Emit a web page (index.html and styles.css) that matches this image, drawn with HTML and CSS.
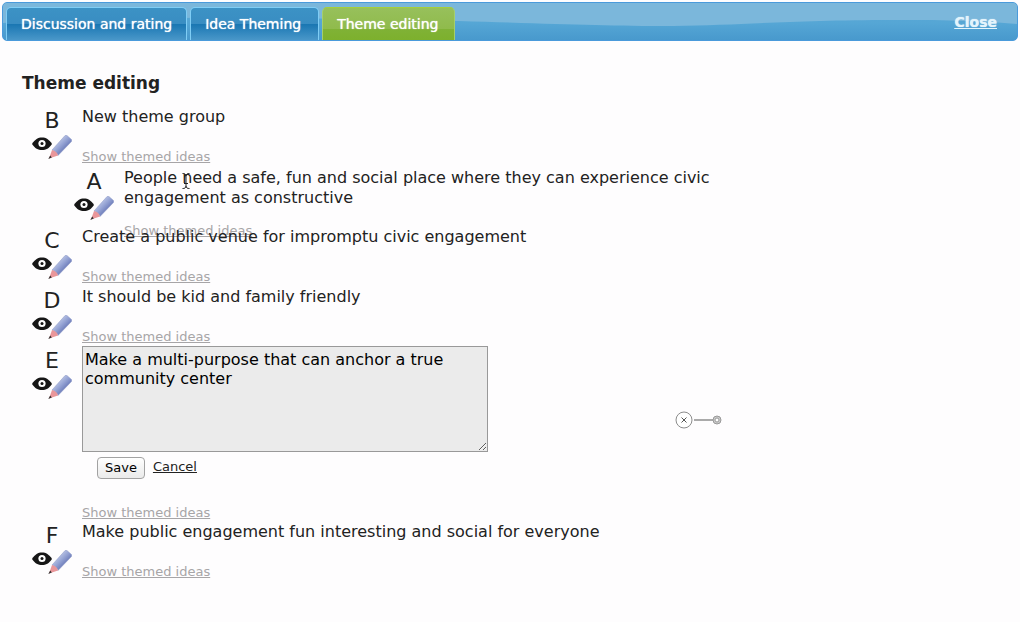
FILE: index.html
```html
<!DOCTYPE html>
<html lang="en">
<head>
<meta charset="utf-8">
<title>Theme editing</title>
<link rel="stylesheet" href="styles.css">
</head>
<body>
<svg class="defs" aria-hidden="true">
  <defs>
    <linearGradient id="pencil-body" x1=".3" y1=".3" x2=".7" y2=".7">
      <stop offset="0" stop-color="#b9c3e4"/>
      <stop offset=".45" stop-color="#95a3d4"/>
      <stop offset="1" stop-color="#6877b6"/>
    </linearGradient>
    <symbol id="eye" viewBox="0 0 20 14">
      <path d="M0 7C3 2.300 6 .5 10 .5S17 2.300 20 7C17 11.500 14 13 10 13S3 11.500 0 7Z" fill="#161616"/>
      <circle cx="10" cy="6.500" r="3.600" fill="#fff"/>
      <circle cx="10" cy="6.500" r="1.500" fill="#161616"/>
    </symbol>
    <symbol id="pencil" viewBox="0 0 24 24">
      <path d="M4 15 17 .6Q18 0 19 .6L23.500 4.500Q24 5.500 23.500 6.500L10 20.500Q8.500 16.500 4 15Z" fill="url(#pencil-body)" stroke="#8d98c6" stroke-width=".5"/>
      <path d="M4 15Q9 16 10 20.500L1 23.500Z" fill="#e9969a"/>
      <path d="M2.200 20.500.3 24 3.800 22.500Z" fill="#333"/>
    </symbol>
  </defs>
</svg>

<header class="bar">
  <svg class="bar-wave" viewBox="0 0 1014 37" preserveAspectRatio="none" aria-hidden="true">
    <path d="M0 20C120 13 300 14 455 18C560 21 600 23 670 23C740 22 790 17 890 17C950 17 980 18 1014 21V0H0Z"/>
  </svg>
  <nav class="tabs">
    <a class="tab" href="#">Discussion and rating</a>
    <a class="tab" href="#">Idea Theming</a>
    <a class="tab tab-active" href="#" aria-current="page">Theme editing</a>
  </nav>
  <a class="close" href="#">Close</a>
</header>

<main class="content">
  <h1 class="title">Theme editing</h1>

  <section class="theme">
    <div class="side"><span class="letter">B</span><span class="tools"><button class="tool" aria-label="View"><svg class="eye"><use href="#eye"/></svg></button><button class="tool" aria-label="Edit"><svg class="pencil"><use href="#pencil"/></svg></button></span></div>
    <div class="body"><p class="text">New theme group</p><a class="show" href="#">Show themed ideas</a></div>
  </section>

  <section class="theme theme-child">
    <div class="side"><span class="letter">A</span><span class="tools"><button class="tool" aria-label="View"><svg class="eye"><use href="#eye"/></svg></button><button class="tool" aria-label="Edit"><svg class="pencil"><use href="#pencil"/></svg></button></span></div>
    <div class="body"><p class="text">People need a safe, fun and social place where they can experience civic engagement as constructive</p><a class="show" href="#">Show themed ideas</a></div>
  </section>

  <section class="theme">
    <div class="side"><span class="letter">C</span><span class="tools"><button class="tool" aria-label="View"><svg class="eye"><use href="#eye"/></svg></button><button class="tool" aria-label="Edit"><svg class="pencil"><use href="#pencil"/></svg></button></span></div>
    <div class="body"><p class="text">Create a public venue for impromptu civic engagement</p><a class="show" href="#">Show themed ideas</a></div>
  </section>

  <section class="theme">
    <div class="side"><span class="letter">D</span><span class="tools"><button class="tool" aria-label="View"><svg class="eye"><use href="#eye"/></svg></button><button class="tool" aria-label="Edit"><svg class="pencil"><use href="#pencil"/></svg></button></span></div>
    <div class="body"><p class="text">It should be kid and family friendly</p><a class="show" href="#">Show themed ideas</a></div>
  </section>

  <section class="theme">
    <div class="side"><span class="letter">E</span><span class="tools"><button class="tool" aria-label="View"><svg class="eye"><use href="#eye"/></svg></button><button class="tool" aria-label="Edit"><svg class="pencil"><use href="#pencil"/></svg></button></span></div>
    <div class="body">
      <form class="editor">
        <textarea class="field" aria-label="Theme text" spellcheck="false">Make a multi-purpose that can anchor a true community center</textarea>
        <div class="actions"><button class="save" type="button">Save</button><a class="cancel" href="#">Cancel</a></div>
      </form>
      <a class="show" href="#">Show themed ideas</a>
    </div>
  </section>

  <section class="theme">
    <div class="side"><span class="letter">F</span><span class="tools"><button class="tool" aria-label="View"><svg class="eye"><use href="#eye"/></svg></button><button class="tool" aria-label="Edit"><svg class="pencil"><use href="#pencil"/></svg></button></span></div>
    <div class="body"><p class="text">Make public engagement fun interesting and social for everyone</p><a class="show" href="#">Show themed ideas</a></div>
  </section>
</main>

<svg class="handle" viewBox="0 0 48 18" aria-hidden="true">
  <circle cx="9" cy="9" r="8" fill="#fff" stroke="#8c8c8c"/>
  <path d="M6.500 6.500l5 5M11.500 6.500l-5 5" stroke="#555"/>
  <path d="M19 9H38" stroke="#aaa" stroke-width="2"/>
  <circle cx="42" cy="9" r="4" fill="#ccc" stroke="#999"/>
  <circle cx="42" cy="9" r="2" fill="#fff" stroke="#999"/>
</svg>
<svg class="cursor" viewBox="0 0 8 16" aria-hidden="true">
  <path d="M.5 .5C2.500 .5 4 1 4 3V13C4 15 2.500 15.500 .5 15.500M7.500 .5C5.500 .5 4 1 4 3M4 13C4 15 5.500 15.500 7.500 15.500M2 10.500H6" fill="none" stroke="#222"/>
</svg>
</body>
</html>
```
FILE: styles.css
```css
body {
  margin: 0;
  background: #fefdfe;
  color: #222;
  font-family: Verdana, "DejaVu Sans", sans-serif;
  font-size: 16px;
  line-height: 20px;
}

.defs {
  position: absolute;
  width: 0;
  height: 0;
}

.bar {
  position: relative;
  display: flex;
  justify-content: space-between;
  margin: 2px 2px 0;
  padding: 4px 20px 0 3px;
  border: 1px solid #4a9adb;
  border-radius: 5px;
  background: linear-gradient(#5dabd6, #55a6d5 55%, #4899cd);
  overflow: hidden;
}

.bar-wave {
  position: absolute;
  inset: 0;
  width: 100%;
  height: 100%;
  fill: #7bb7db;
}

.tabs {
  position: relative;
  display: flex;
  gap: 3px;
}

.tab {
  box-sizing: border-box;
  min-width: 129px;
  padding: 6px 14px;
  border: 1px solid #7fcdf5;
  border-bottom: 0;
  border-radius: 5px 5px 0 0;
  background: linear-gradient(#3c92c5, #398dc2 50%, #1976b2 50%, #4997c9);
  color: #fff;
  font-size: 14px;
  text-decoration: none;
  text-shadow: 0 0 1px #fff;
}

.tab-active {
  min-width: 133px;
  border-color: #a5cf6c;
  border-top-color: #a5cf3c;
  background: linear-gradient(#97c05b, #90bb4c 65%, #80b236 65%, #7db02d);
}

.close {
  position: relative;
  padding-top: 5px;
  color: #e4f4fc;
  font-size: 14px;
  font-weight: bold;
  text-shadow: 0 0 1px #e4f4fc;
}

.content {
  padding: 32px 22px;
}

.title {
  margin: 0 0 13px;
  font-size: 17px;
  line-height: 20px;
}

.theme {
  display: grid;
  grid-template-columns: 60px 1fr;
  min-height: 60px;
}

.theme-child {
  max-width: 680px;
  margin-bottom: -13px;
  padding-top: 1px;
  padding-left: 42px;
}

.side {
  display: flex;
  flex-direction: column;
  width: 60px;
}

.letter {
  height: 29px;
  text-align: center;
  font-size: 22px;
  line-height: 29px;
}

.tools {
  display: flex;
  padding-left: 10px;
}

.tool {
  display: flex;
  padding: 0;
  border: 0;
  background: none;
}

.eye {
  width: 20px;
  height: 14px;
  margin-top: 2px;
}

.pencil {
  width: 24px;
  height: 24px;
  margin-left: -4px;
}

.text {
  min-height: 27px;
  margin: 0 0 15px;
  padding-top: 1px;
}

.show {
  display: block;
  width: fit-content;
  color: #a7a5a7;
  font-size: 13px;
  line-height: 16px;
}

.editor {
  display: flex;
  flex-direction: column;
  align-items: flex-start;
  gap: 5px;
  margin-bottom: 26px;
}

.field {
  box-sizing: border-box;
  width: 406px;
  height: 106px;
  padding: 3px 2px;
  border: 1px solid #999;
  background: #ebebeb;
  color: #000;
  font: 16px/19px Verdana, "DejaVu Sans", sans-serif;
}

.actions {
  display: flex;
  gap: 8px;
  padding-left: 15px;
  font-size: 13px;
}

.save {
  height: 22px;
  padding: 0 7px;
  border: 1px solid #a2a2a2;
  border-radius: 4px;
  background: linear-gradient(#fff, #f4f4f4 50%, #ebebeb);
  color: #000;
  font: 13px/18px Verdana, "DejaVu Sans", sans-serif;
}

.cancel {
  color: #222;
}

.handle {
  position: absolute;
  left: 675px;
  top: 411px;
  width: 48px;
  height: 18px;
}

.cursor {
  position: absolute;
  left: 182px;
  top: 173px;
  width: 8px;
  height: 16px;
}
```
